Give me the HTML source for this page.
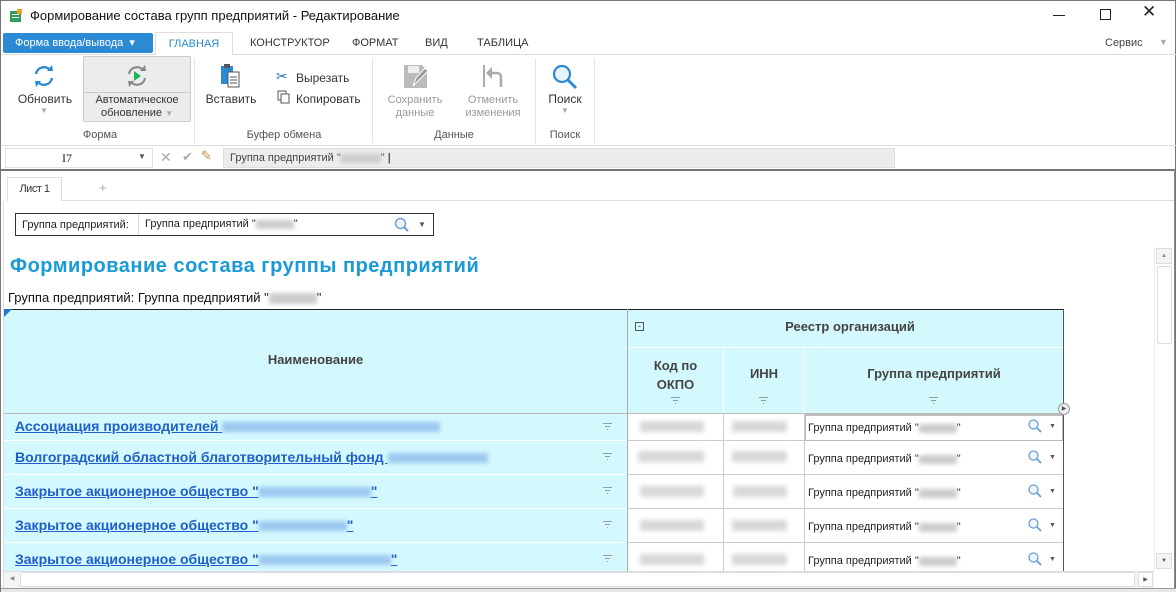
<!DOCTYPE html>
<html><head><meta charset="utf-8">
<style>
*{box-sizing:border-box;margin:0;padding:0}
body{width:1176px;height:592px;overflow:hidden;background:#fff;font-family:"Liberation Sans","DejaVu Sans",sans-serif;position:relative;color:#222}
.a{position:absolute}
.t11{font-size:11px}
.rib{font-size:11px;color:#333;text-align:center;line-height:13px}
.dis{color:#999}
.blur{display:inline-block;background:#ccc;filter:blur(2px);height:9px;vertical-align:middle}
.bb{display:inline-block;background:#9cc8f0;filter:blur(2px);height:10px;vertical-align:middle}
.lnk{color:#1f5fc9;font-weight:bold;font-size:14px;text-decoration:underline;white-space:nowrap}
.cellg{background:#d8d8d8;filter:blur(2.5px);height:11px}
.fl{position:absolute;width:10px;height:8px}
.fl i{position:absolute;height:1px;background:#999;display:block}
</style></head><body>
<div class="a" style="left:0;top:0;width:1176px;height:592px;border:1px solid #777"></div>
<svg class="a" style="left:9px;top:9px" width="14" height="14"><rect x="1" y="2" width="11" height="11" fill="#2e9e5b"/><rect x="3" y="5" width="7" height="1" fill="#fff"/><rect x="3" y="8" width="7" height="1" fill="#fff"/><rect x="8" y="0" width="5" height="5" fill="#f0a020"/></svg>
<div class="a" style="left:30px;top:8px;font-size:13px;color:#111">Формирование состава групп предприятий - Редактирование</div>
<div class="a" style="left:1053px;top:15px;width:12px;height:1px;background:#222"></div>
<div class="a" style="left:1100px;top:9px;width:11px;height:11px;border:1px solid #222"></div>
<div class="a" style="left:1142px;top:2px;font-size:17px;color:#222">✕</div>
<div class="a" style="left:3px;top:33px;width:150px;height:20px;background:#2a8ad4;border-radius:2px;color:#fff;font-size:11px;line-height:20px;padding-left:12px">Форма ввода/вывода &nbsp;▾</div>
<div class="a" style="left:155px;top:32px;width:78px;height:23px;border:1px solid #ddd;border-bottom:none;background:#fff;color:#2a8ad4;font-size:11px;text-align:center;line-height:22px">ГЛАВНАЯ</div>
<div class="a t11" style="left:250px;top:37px;color:#333">КОНСТРУКТОР</div>
<div class="a t11" style="left:352px;top:37px;color:#333">ФОРМАТ</div>
<div class="a t11" style="left:425px;top:37px;color:#333">ВИД</div>
<div class="a t11" style="left:477px;top:37px;color:#333">ТАБЛИЦА</div>
<div class="a t11" style="left:1105px;top:37px;color:#444">Сервис</div>
<div class="a" style="left:1159px;top:37px;font-size:9px;color:#aaa">▼</div>
<div class="a" style="left:233px;top:54px;width:943px;height:1px;background:#ddd"></div>
<div class="a" style="left:1px;top:54px;width:154px;height:1px;background:#ddd"></div>
<svg class="a" style="left:31px;top:63px" width="26" height="26" viewBox="0 0 26 26"><path d="M5 11a8 8 0 0 1 14-4" fill="none" stroke="#2a8ad4" stroke-width="2.4"/><path d="M21 15a8 8 0 0 1-14 4" fill="none" stroke="#2a8ad4" stroke-width="2.4"/><path d="M16 8l6 0-1-6z" fill="#2a8ad4"/><path d="M10 18l-6 0 1 6z" fill="#2a8ad4"/></svg>
<div class="a rib" style="left:14px;top:93px;width:62px;font-size:12px">Обновить</div>
<div class="a" style="left:40px;top:106px;font-size:8px;color:#aaa">▼</div>
<div class="a" style="left:83px;top:56px;width:108px;height:66px;background:#ececec;border:1px solid #ccc;border-radius:2px"></div>
<div class="a" style="left:84px;top:92px;width:106px;height:1px;background:#ccc"></div>
<svg class="a" style="left:124px;top:63px" width="26" height="26" viewBox="0 0 26 26"><path d="M5 11a8 8 0 0 1 14-4" fill="none" stroke="#888" stroke-width="2.2"/><path d="M21 15a8 8 0 0 1-14 4" fill="none" stroke="#888" stroke-width="2.2"/><path d="M16 8l6 0-1-6z" fill="#888"/><path d="M10 18l-6 0 1 6z" fill="#888"/><path d="M10 8l7 5-7 5z" fill="#1eb45a"/></svg>
<div class="a rib" style="left:84px;top:94px;width:106px;font-size:11px">Автоматическое<br>обновление <span style="font-size:8px;color:#aaa">▼</span></div>
<div class="a" style="left:194px;top:58px;width:1px;height:85px;background:#e4e4e4"></div>
<div class="a rib" style="left:60px;top:129px;width:80px;color:#555">Форма</div>
<svg class="a" style="left:219px;top:63px" width="24" height="26"><rect x="2" y="3" width="12" height="18" fill="#2a8ad4"/><rect x="5" y="1" width="6" height="4" fill="#555"/><rect x="9" y="9" width="11" height="15" fill="#fff" stroke="#555"/><line x1="11" y1="14" x2="18" y2="14" stroke="#555"/><line x1="11" y1="17" x2="18" y2="17" stroke="#555"/><line x1="11" y1="20" x2="18" y2="20" stroke="#555"/></svg>
<div class="a rib" style="left:203px;top:93px;width:56px;font-size:12px">Вставить</div>
<div class="a" style="left:276px;top:68px;font-size:14px;color:#2a6ab4">✂</div>
<div class="a" style="left:296px;top:71px;font-size:12px;color:#333">Вырезать</div>
<svg class="a" style="left:277px;top:90px" width="14" height="14"><rect x="1" y="1" width="8" height="9" fill="#fff" stroke="#555"/><rect x="4" y="4" width="8" height="9" fill="#fff" stroke="#555"/></svg>
<div class="a" style="left:296px;top:92px;font-size:12px;color:#333">Копировать</div>
<div class="a rib" style="left:230px;top:129px;width:108px;color:#555">Буфер обмена</div>
<div class="a" style="left:372px;top:58px;width:1px;height:85px;background:#e4e4e4"></div>
<svg class="a" style="left:403px;top:64px" width="26" height="26"><path d="M1 1h18l5 5v18H1z" fill="#bbb"/><rect x="5" y="2" width="11" height="7" fill="#eee"/><path d="M10 22l3-8 9-10 3 3-10 10z" fill="#999" stroke="#fff"/></svg>
<div class="a rib dis" style="left:380px;top:94px;width:70px;font-size:11px">Сохранить<br>данные</div>
<svg class="a" style="left:481px;top:64px" width="24" height="26"><rect x="2" y="1" width="2" height="22" fill="#aaa"/><path d="M20 23V13a4 4 0 0 0-4-4H9" fill="none" stroke="#aaa" stroke-width="2.5"/><path d="M11 3L5 9l6 6z" fill="#aaa"/></svg>
<div class="a rib dis" style="left:458px;top:94px;width:70px;font-size:11px">Отменить<br>изменения</div>
<div class="a rib" style="left:400px;top:129px;width:108px;color:#555">Данные</div>
<div class="a" style="left:535px;top:58px;width:1px;height:85px;background:#e4e4e4"></div>
<svg class="a" style="left:551px;top:63px" width="28" height="28"><circle cx="11" cy="11" r="8" fill="#e8f3fb" stroke="#2a8ad4" stroke-width="2.2"/><line x1="17" y1="17" x2="25" y2="25" stroke="#2a8ad4" stroke-width="3"/></svg>
<div class="a rib" style="left:542px;top:93px;width:46px;font-size:12px">Поиск</div>
<div class="a" style="left:561px;top:106px;font-size:8px;color:#aaa">▼</div>
<div class="a rib" style="left:542px;top:129px;width:46px;color:#555">Поиск</div>
<div class="a" style="left:594px;top:58px;width:1px;height:85px;background:#e4e4e4"></div>
<div class="a" style="left:1px;top:145px;width:1175px;height:1px;background:#ddd"></div>
<div class="a" style="left:5px;top:148px;width:148px;height:20px;border:1px solid #e2e2e2;font-family:'Liberation Serif',serif;font-size:12px;line-height:19px;padding-left:56px">I7</div>
<div class="a" style="left:138px;top:152px;font-size:8px;color:#555">▼</div>
<div class="a" style="left:160px;top:149px;font-size:14px;color:#aaa">✕</div>
<div class="a" style="left:182px;top:149px;font-size:13px;color:#aaa">✔</div>
<div class="a" style="left:201px;top:148px;font-size:13px;color:#c08a30">✎</div>
<div class="a" style="left:223px;top:148px;width:672px;height:20px;background:#ececec;border:1px solid #ddd;font-size:11px;line-height:18px;padding-left:6px;color:#444">Группа предприятий "<span class="blur" style="width:40px"></span>" <span style="color:#000">|</span></div>
<div class="a" style="left:1px;top:169px;width:1175px;height:2px;background:#777"></div>
<div class="a" style="left:7px;top:177px;width:55px;height:24px;border:1px solid #ddd;border-bottom:none;background:#fff;font-size:11px;text-align:center;line-height:22px;color:#333;letter-spacing:-0.5px">Лист 1</div>
<div class="a" style="left:99px;top:180px;font-size:13px;color:#aaa">+</div>
<div class="a" style="left:62px;top:200px;width:1112px;height:1px;background:#ddd"></div>
<div class="a" style="left:3px;top:200px;width:1px;height:390px;background:#ddd"></div>
<div class="a" style="left:1174px;top:170px;width:1px;height:420px;background:#888"></div>
<div class="a" style="left:15px;top:213px;width:419px;height:23px;border:1px solid #333"></div>
<div class="a" style="left:22px;top:219px;font-size:11px;color:#222">Группа предприятий:</div>
<div class="a" style="left:138px;top:214px;width:295px;height:21px;border-left:1px solid #ddd;font-size:11px;line-height:20px;padding-left:6px">Группа предприятий "<span class="blur" style="width:38px"></span>"</div>
<svg class="a" style="left:394px;top:217px" width="16" height="16"><circle cx="6.5" cy="6.5" r="5" fill="#eef5fb" stroke="#6a9ed4" stroke-width="1.4"/><line x1="10" y1="10" x2="14" y2="14" stroke="#6a9ed4" stroke-width="2"/></svg>
<div class="a" style="left:418px;top:220px;font-size:8px;color:#555">▼</div>
<div class="a" style="left:10px;top:255px;font-size:20px;font-weight:bold;color:#1a9ad6;letter-spacing:0.5px">Формирование состава группы предприятий</div>
<div class="a" style="left:8px;top:290px;font-size:13px;color:#111">Группа предприятий: Группа предприятий "<span class="blur" style="width:48px;height:11px"></span>"</div>
<div class="a" style="left:4px;top:309px;width:1060px;height:262px;background:#fff"></div>
<div class="a" style="left:4px;top:309px;width:623px;height:262px;background:#d3f8fd"></div>
<div class="a" style="left:627px;top:309px;width:437px;height:104px;background:#d3f8fd"></div>
<div class="a" style="left:4px;top:309px;width:1060px;height:1px;background:#222"></div>
<div class="a" style="left:1063px;top:309px;width:1px;height:262px;background:#555"></div>
<div class="a" style="left:4px;top:309px;width:0;height:0;border-top:8px solid #2a70d0;border-right:8px solid transparent"></div>
<div class="a" style="left:4px;top:413px;width:1060px;height:1px;background:#bbb"></div>
<div class="a" style="left:627px;top:309px;width:1px;height:262px;background:#aaa"></div>
<div class="a" style="left:628px;top:347px;width:435px;height:1px;background:#fff"></div>
<div class="a" style="left:723px;top:348px;width:1px;height:223px;background:#fff"></div>
<div class="a" style="left:723px;top:413px;width:1px;height:158px;background:#ccc"></div>
<div class="a" style="left:804px;top:348px;width:1px;height:223px;background:#fff"></div>
<div class="a" style="left:804px;top:413px;width:1px;height:158px;background:#ccc"></div>
<div class="a" style="left:4px;top:352px;width:623px;text-align:center;font-size:13px;font-weight:bold;color:#444">Наименование</div>
<div class="a" style="left:635px;top:322px;width:9px;height:9px;border:1px solid #555;font-size:9px;line-height:6px;text-align:center">-</div>
<div class="a" style="left:740px;top:319px;width:220px;text-align:center;font-size:13px;font-weight:bold;color:#444">Реестр организаций</div>
<div class="a" style="left:628px;top:356px;width:95px;text-align:center;font-size:13px;font-weight:bold;color:#444;line-height:19px">Код по<br>ОКПО</div>
<div class="a" style="left:724px;top:366px;width:80px;text-align:center;font-size:13px;font-weight:bold;color:#444">ИНН</div>
<div class="a" style="left:805px;top:366px;width:258px;text-align:center;font-size:13px;font-weight:bold;color:#444">Группа предприятий</div>

<div class="fl" style="left:671px;top:397px"><i style="left:0;top:0;width:9px"></i><i style="left:2px;top:3px;width:5px"></i><i style="left:4px;top:6px;width:1px"></i></div>
<div class="fl" style="left:759px;top:397px"><i style="left:0;top:0;width:9px"></i><i style="left:2px;top:3px;width:5px"></i><i style="left:4px;top:6px;width:1px"></i></div>
<div class="fl" style="left:929px;top:397px"><i style="left:0;top:0;width:9px"></i><i style="left:2px;top:3px;width:5px"></i><i style="left:4px;top:6px;width:1px"></i></div>

<div class="a" style="left:4px;top:440px;width:623px;height:1px;background:#fff"></div>
<div class="a" style="left:4px;top:474px;width:623px;height:1px;background:#fff"></div>
<div class="a" style="left:4px;top:508px;width:623px;height:1px;background:#fff"></div>
<div class="a" style="left:4px;top:542px;width:623px;height:1px;background:#fff"></div>
<div class="a" style="left:628px;top:440px;width:435px;height:1px;background:#ccc"></div>
<div class="a" style="left:628px;top:474px;width:435px;height:1px;background:#ccc"></div>
<div class="a" style="left:628px;top:508px;width:435px;height:1px;background:#ccc"></div>
<div class="a" style="left:628px;top:542px;width:435px;height:1px;background:#ccc"></div>

<div class="a lnk" style="left:15px;top:418px">Ассоциация производителей <span class="bb" style="width:218px"></span></div>
<div class="a lnk" style="left:15px;top:449px">Волгоградский областной благотворительный фонд <span class="bb" style="width:100px"></span></div>
<div class="a lnk" style="left:15px;top:483px">Закрытое акционерное общество "<span class="bb" style="width:112px"></span>"</div>
<div class="a lnk" style="left:15px;top:517px">Закрытое акционерное общество "<span class="bb" style="width:88px"></span>"</div>
<div class="a lnk" style="left:15px;top:551px">Закрытое акционерное общество "<span class="bb" style="width:132px"></span>"</div>

<div class="fl" style="left:603px;top:423px"><i style="left:0;top:0;width:9px"></i><i style="left:2px;top:3px;width:5px"></i><i style="left:4px;top:6px;width:1px"></i></div>
<div class="fl" style="left:603px;top:453px"><i style="left:0;top:0;width:9px"></i><i style="left:2px;top:3px;width:5px"></i><i style="left:4px;top:6px;width:1px"></i></div>
<div class="fl" style="left:603px;top:487px"><i style="left:0;top:0;width:9px"></i><i style="left:2px;top:3px;width:5px"></i><i style="left:4px;top:6px;width:1px"></i></div>
<div class="fl" style="left:603px;top:521px"><i style="left:0;top:0;width:9px"></i><i style="left:2px;top:3px;width:5px"></i><i style="left:4px;top:6px;width:1px"></i></div>
<div class="fl" style="left:603px;top:555px"><i style="left:0;top:0;width:9px"></i><i style="left:2px;top:3px;width:5px"></i><i style="left:4px;top:6px;width:1px"></i></div>

<div class="a cellg" style="left:640px;top:421px;width:64px"></div>
<div class="a cellg" style="left:732px;top:421px;width:55px"></div>
<div class="a cellg" style="left:638px;top:451px;width:66px"></div>
<div class="a cellg" style="left:732px;top:451px;width:55px"></div>
<div class="a cellg" style="left:640px;top:486px;width:64px"></div>
<div class="a cellg" style="left:733px;top:486px;width:54px"></div>
<div class="a cellg" style="left:640px;top:520px;width:64px"></div>
<div class="a cellg" style="left:732px;top:520px;width:55px"></div>
<div class="a cellg" style="left:640px;top:554px;width:64px"></div>
<div class="a cellg" style="left:732px;top:554px;width:55px"></div>

<div class="a" style="left:805px;top:414px;width:258px;height:27px;border:1px solid #bbb;border-top:2px solid #bbb"></div>
<div class="a" style="left:1058px;top:403px;width:12px;height:12px;border-radius:50%;background:#eee;border:1px solid #999;font-size:6px;line-height:10px;text-align:center;color:#555">▶</div>
<div class="a t11" style="left:808px;top:422px">Группа предприятий "<span class="blur" style="width:38px"></span>"</div>
<div class="a t11" style="left:808px;top:453px">Группа предприятий "<span class="blur" style="width:38px"></span>"</div>
<div class="a t11" style="left:808px;top:487px">Группа предприятий "<span class="blur" style="width:38px"></span>"</div>
<div class="a t11" style="left:808px;top:521px">Группа предприятий "<span class="blur" style="width:38px"></span>"</div>
<div class="a t11" style="left:808px;top:555px">Группа предприятий "<span class="blur" style="width:38px"></span>"</div>
<svg class="a" style="left:1028px;top:419px" width="14" height="14"><circle cx="5.5" cy="5.5" r="4.5" fill="#eef5fb" stroke="#6a9ed4" stroke-width="1.3"/><line x1="9" y1="9" x2="13" y2="13" stroke="#6a9ed4" stroke-width="1.8"/></svg>
<svg class="a" style="left:1028px;top:450px" width="14" height="14"><circle cx="5.5" cy="5.5" r="4.5" fill="#eef5fb" stroke="#6a9ed4" stroke-width="1.3"/><line x1="9" y1="9" x2="13" y2="13" stroke="#6a9ed4" stroke-width="1.8"/></svg>
<svg class="a" style="left:1028px;top:484px" width="14" height="14"><circle cx="5.5" cy="5.5" r="4.5" fill="#eef5fb" stroke="#6a9ed4" stroke-width="1.3"/><line x1="9" y1="9" x2="13" y2="13" stroke="#6a9ed4" stroke-width="1.8"/></svg>
<svg class="a" style="left:1028px;top:518px" width="14" height="14"><circle cx="5.5" cy="5.5" r="4.5" fill="#eef5fb" stroke="#6a9ed4" stroke-width="1.3"/><line x1="9" y1="9" x2="13" y2="13" stroke="#6a9ed4" stroke-width="1.8"/></svg>
<svg class="a" style="left:1028px;top:552px" width="14" height="14"><circle cx="5.5" cy="5.5" r="4.5" fill="#eef5fb" stroke="#6a9ed4" stroke-width="1.3"/><line x1="9" y1="9" x2="13" y2="13" stroke="#6a9ed4" stroke-width="1.8"/></svg>
<div class="a" style="left:1049px;top:423px;font-size:7px;color:#555">▼</div>
<div class="a" style="left:1049px;top:454px;font-size:7px;color:#555">▼</div>
<div class="a" style="left:1049px;top:488px;font-size:7px;color:#555">▼</div>
<div class="a" style="left:1049px;top:522px;font-size:7px;color:#555">▼</div>
<div class="a" style="left:1049px;top:556px;font-size:7px;color:#555">▼</div>
<div class="a" style="left:1154px;top:247px;width:19px;height:324px;background:#fff;border-left:1px solid #eee"></div>
<div class="a" style="left:1156px;top:248px;width:16px;height:16px;border:1px solid #ddd;background:#f4f4f4;font-size:6px;color:#888;text-align:center;line-height:14px">▲</div>
<div class="a" style="left:1157px;top:266px;width:15px;height:78px;border:1px solid #ddd;border-radius:2px;background:#fff"></div>
<div class="a" style="left:1156px;top:553px;width:16px;height:16px;border:1px solid #ddd;background:#f4f4f4;font-size:6px;color:#555;text-align:center;line-height:14px">▼</div>
<div class="a" style="left:4px;top:571px;width:1150px;height:17px;background:#f4f4f4;border-top:1px solid #ddd"></div>
<div class="a" style="left:5px;top:572px;width:14px;height:15px;font-size:6px;color:#888;text-align:center;line-height:15px">◀</div>
<div class="a" style="left:20px;top:572px;width:1115px;height:15px;background:#fff;border:1px solid #ddd;border-radius:2px"></div>
<div class="a" style="left:1138px;top:572px;width:15px;height:15px;font-size:6px;color:#555;text-align:center;line-height:15px;border:1px solid #ddd;background:#fff">▶</div>
<div class="a" style="left:1px;top:588px;width:1175px;height:4px;background:#e8e8e8;border-top:1px solid #999"></div>
</body></html>
